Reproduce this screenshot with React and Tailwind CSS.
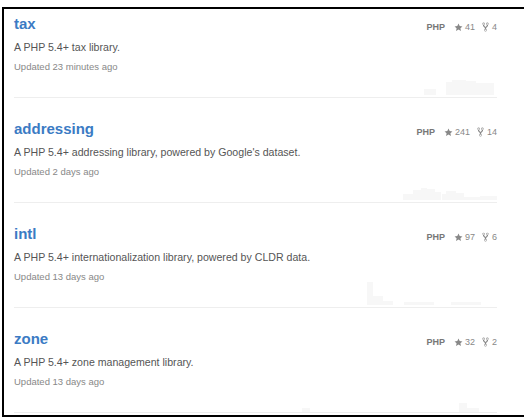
import React from "react";

const repos = [
  {
    name: "tax",
    desc: "A PHP 5.4+ tax library.",
    updated: "Updated 23 minutes ago",
    stars: "41",
    forks: "4",
    first: true,
    bars: [
      [424, 92, 12, 6],
      [446, 85, 6, 13],
      [452, 83, 14, 15],
      [466, 84, 10, 14],
      [476, 86, 18, 12],
    ],
  },
  {
    name: "addressing",
    desc: "A PHP 5.4+ addressing library, powered by Google's dataset.",
    updated: "Updated 2 days ago",
    stars: "241",
    forks: "14",
    bars: [
      [403, 92, 10, 6],
      [413, 88, 8, 10],
      [421, 86, 6, 12],
      [427, 87, 8, 11],
      [435, 90, 6, 8],
      [442, 92, 4, 6],
      [446, 89, 10, 9],
      [456, 91, 8, 7],
      [464, 95, 16, 3],
      [480, 94, 17, 4],
    ],
  },
  {
    name: "intl",
    desc: "A PHP 5.4+ internationalization library, powered by CLDR data.",
    updated: "Updated 13 days ago",
    stars: "97",
    forks: "6",
    bars: [
      [367, 75, 6, 23],
      [373, 89, 10, 9],
      [383, 94, 10, 4],
      [404, 95, 30, 3],
      [451, 95, 30, 3],
    ],
  },
  {
    name: "zone",
    desc: "A PHP 5.4+ zone management library.",
    updated: "Updated 13 days ago",
    stars: "32",
    forks: "2",
    last: true,
    bars: [
      [302, 96, 8, 4],
      [459, 91, 8, 9],
      [467, 96, 12, 4],
    ],
  },
];

function Star() {
  return (
    <svg width="9" height="9" viewBox="0 0 14 16" className="inline-block">
      <path
        fill="currentColor"
        d="M14 6l-4.9-.64L7 1 4.9 5.36 0 6l3.6 3.26L2.67 14 7 11.67 11.33 14l-.93-4.74z"
      />
    </svg>
  );
}

function Fork() {
  return (
    <svg width="7" height="10" viewBox="0 0 10 16" className="inline-block">
      <path
        fill="currentColor"
        d="M8 1a1.993 1.993 0 0 0-1 3.72V6L5 8 3 6V4.72A1.993 1.993 0 0 0 2 1a1.993 1.993 0 0 0-1 3.72V6.5l3 3v1.78A1.993 1.993 0 0 0 5 15a1.993 1.993 0 0 0 1-3.72V9.5l3-3V4.72A1.993 1.993 0 0 0 8 1zM2 4.2C1.340 4.200.8 3.650.8 3c0-.65.55-1.200 1.200-1.200.65 0 1.200.55 1.200 1.200 0 .65-.55 1.200-1.200 1.200zm3 10c-.66 0-1.200-.55-1.200-1.200 0-.65.55-1.200 1.200-1.200.65 0 1.200.55 1.200 1.200 0 .65-.55 1.200-1.200 1.200zm3-10c-.66 0-1.200-.55-1.200-1.200 0-.65.55-1.200 1.200-1.200.65 0 1.200.55 1.200 1.200 0 .65-.55 1.200-1.200 1.200z"
      />
    </svg>
  );
}

function Repo({ r }) {
  return (
    <div
      className={
        "relative border-b border-[#eeeeee] pb-[22px] " +
        (r.first ? "pt-[5px]" : "pt-[21px]")
      }
    >
      <svg
        className="absolute bottom-0"
        width="524"
        height="100"
        viewBox="0 0 524 100"
        style={{ right: -27 }}
      >
        {r.bars.map((b, i) => (
          <rect key={i} x={b[0]} y={b[1]} width={b[2]} height={b[3]} fill="#f7f7f7" />
        ))}
      </svg>
      <div className="relative flex items-start justify-between">
        <div className="text-[15px] leading-[20px] font-bold text-[#3b7bc4]">{r.name}</div>
        <div className="flex items-center gap-[6px] pt-[7px] text-[9px] leading-[12px] text-[#888888]">
          <span className="font-bold text-[#777777] mr-[3px]">PHP</span>
          <span className="flex items-center gap-[2px]">
            <Star />
            <span>{r.stars}</span>
          </span>
          <span className="flex items-center gap-[3px] ml-[1px]">
            <Fork />
            <span>{r.forks}</span>
          </span>
        </div>
      </div>
      <div className="relative mt-[5px] text-[10.6px] leading-[16px] text-[#555555]">{r.desc}</div>
      <div className="relative mt-[4px] text-[9.5px] leading-[16px] text-[#888888]">{r.updated}</div>
    </div>
  );
}

export default function App() {
  return (
    <div
      className="w-[524px] h-[417px] bg-white overflow-hidden pt-[7px] pl-[2px]"
      style={{ fontFamily: '"Liberation Sans", Arial, sans-serif' }}
    >
      <div className="h-[410px] border-l-2 border-t-2 border-b-2 border-black pl-[10px] pr-[27px] overflow-hidden">
        {repos.map((r) => (
          <Repo key={r.name} r={r} />
        ))}
      </div>
    </div>
  );
}
